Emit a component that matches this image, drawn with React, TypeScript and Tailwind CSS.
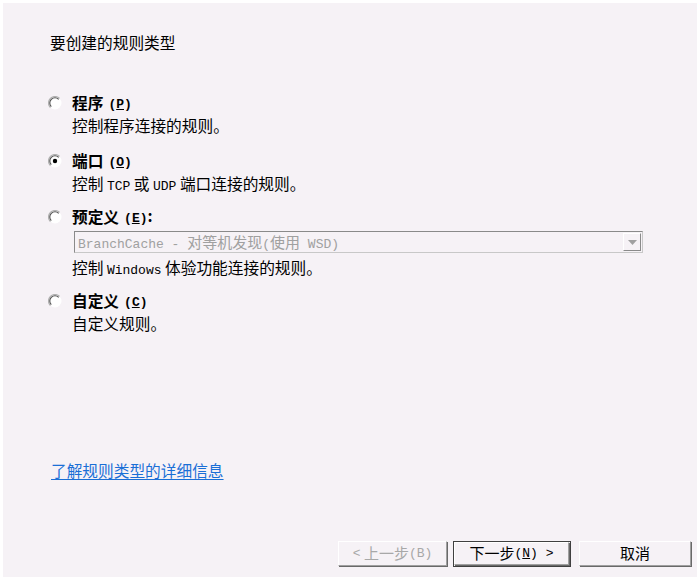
import React from "react";

const cjk = "font-['Noto_Sans_CJK_SC',sans-serif]";
const mono = "font-['Liberation_Mono',monospace] text-[13px] leading-none";

function Radio({ checked = false }: { checked?: boolean }) {
  return (
    <svg width="14" height="14" viewBox="0 0 14 14" className="shrink-0">
      <circle cx="7" cy="7" r="6.5" fill="#ffffff" />
      <path d="M2.4 11.6 A6.5 6.5 0 0 1 11.6 2.4" stroke="#b0b0b0" strokeWidth="1.2" fill="none" />
      <path d="M3.3 10.7 A5.2 5.2 0 0 1 10.7 3.3" stroke="#505050" strokeWidth="1.1" fill="none" />
      {checked && <circle cx="7" cy="7" r="2.2" fill="#000000" />}
    </svg>
  );
}

function Key({ k }: { k: string }) {
  return (
    <span className={`${mono} font-bold`}>
      (<span className="underline underline-offset-1">{k}</span>)
    </span>
  );
}

function Option({
  label,
  k,
  colon = false,
  checked = false,
  children,
}: {
  label: string;
  k: string;
  colon?: boolean;
  checked?: boolean;
  children: React.ReactNode;
}) {
  return (
    <div className="flex">
      <div className="flex h-[23px] w-[24px] items-center">
        <Radio checked={checked} />
      </div>
      <div className="flex flex-col">
        <div className="flex h-[23px] items-center gap-[5px] font-bold leading-none">
          <span>{label}</span>
          <span>
            <Key k={k} />
            {colon && <span className="font-bold">:</span>}
          </span>
        </div>
        {children}
      </div>
    </div>
  );
}

function WinButton({
  children,
  primary = false,
  disabled = false,
  width,
}: {
  children: React.ReactNode;
  primary?: boolean;
  disabled?: boolean;
  width: string;
}) {
  return (
    <div className={`h-[26px] ${width} pr-[1px] pb-[1px] ${primary ? "border border-[#404040]" : ""}`}>
      <div
        className={`flex h-full w-full items-center justify-center border border-t-white border-l-white border-r-[#a0a0a0] border-b-[#a0a0a0] shadow-[1px_1px_0_#696969] ${
          disabled ? "text-[#a8a8a8]" : "text-black"
        }`}
      >
        {children}
      </div>
    </div>
  );
}

export default function App() {
  return (
    <div className={`h-[577px] w-[697px] bg-white pl-[3px] pt-[3px] text-[15.7px] text-black ${cjk}`}>
      <div className="flex h-full flex-col bg-[#f6f2f6] pl-[45px] pr-[5px] pb-[10px]">
        <div className="mt-[28px] ml-[2px] h-[23px] leading-[23px]">要创建的规则类型</div>

        <div className="mt-[37px]">
          <Option label="程序" k="P">
            <div className="h-[23px] leading-[23px]">控制程序连接的规则。</div>
          </Option>
        </div>

        <div className="mt-[12px]">
          <Option label="端口" k="O" checked>
            <div className="h-[23px] leading-[23px]">
              控制 <span className={mono}>TCP</span> 或 <span className={mono}>UDP</span> 端口连接的规则。
            </div>
          </Option>
        </div>

        <div className="mt-[10px]">
          <Option label="预定义" k="E" colon>
            <div className="mt-[3px] ml-[2px] flex h-[22px] w-[569px] items-center border border-t-[#8a8a8a] border-l-[#8a8a8a] border-r-[#c8c8c8] border-b-[#c8c8c8] bg-[#f6f2f6] text-[15px] leading-none">
              <div className="flex-1 whitespace-nowrap pl-[3px] text-[#a0a0a0]">
                <span className={mono}>BranchCache - </span>对等机发现<span className={mono}>(</span>使用
                <span className={mono}> WSD)</span>
              </div>
              <div className="mr-[1px] flex h-[18px] w-[18px] items-center justify-center border border-t-white border-l-white border-r-[#8a8a8a] border-b-[#8a8a8a] bg-[#f6f2f6]">
                <svg width="9" height="5" viewBox="0 0 9 5">
                  <path d="M0 0 H9 L4.5 5 Z" fill="#a0a0a0" />
                </svg>
              </div>
            </div>
            <div className="mt-[3px] h-[23px] leading-[23px]">
              控制 <span className={mono}>Windows</span> 体验功能连接的规则。
            </div>
          </Option>
        </div>

        <div className="mt-[10px]">
          <Option label="自定义" k="C">
            <div className="h-[23px] leading-[23px]">自定义规则。</div>
          </Option>
        </div>

        <div className="mt-[124px] ml-[3px] h-[23px] leading-[23px]">
          <span className="cursor-pointer text-[#1a6fd6] underline underline-offset-2">了解规则类型的详细信息</span>
        </div>

        <div className="mt-auto flex items-end justify-end text-[15px]">
          <WinButton width="w-[110px]" disabled>
            <span className={mono}>&lt;</span>&nbsp;上一步<span className={mono}>(B)</span>
          </WinButton>
          <div className="ml-[5px]">
            <WinButton width="w-[118px]" primary>
              下一步<span className={mono}>(</span>
              <span className={`${mono} underline`}>N</span>
              <span className={mono}>) &gt;</span>
            </WinButton>
          </div>
          <div className="ml-[8px]">
            <WinButton width="w-[113px]">取消</WinButton>
          </div>
        </div>
      </div>
    </div>
  );
}
